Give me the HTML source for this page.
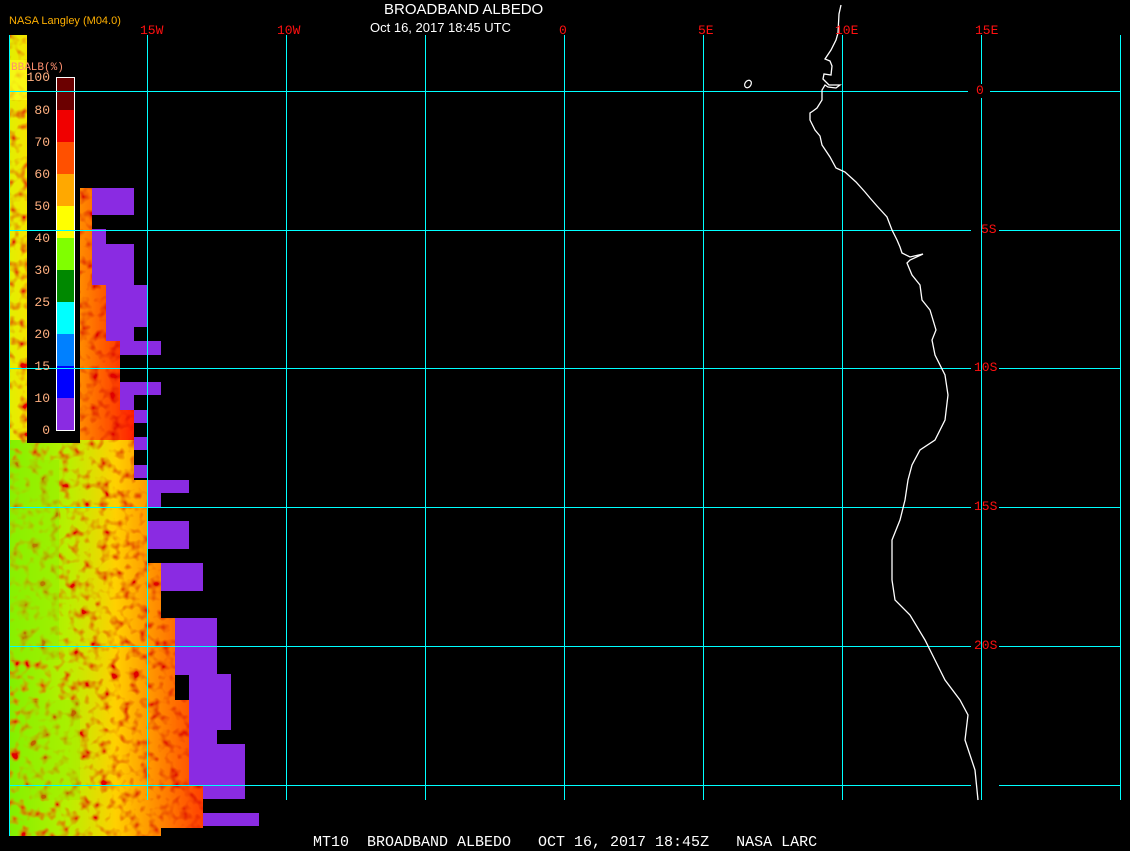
<!DOCTYPE html>
<html><head><meta charset="utf-8"><style>
html,body{margin:0;padding:0;background:#000;}
body{width:1130px;height:850px;position:relative;overflow:hidden;font-family:"Liberation Sans",sans-serif;}
.t{position:absolute;white-space:nowrap;}
.lab{position:absolute;color:#ff1010;font-family:"Liberation Mono",monospace;font-size:13px;line-height:13px;}
.lg{position:absolute;color:#ffb080;font-family:"Liberation Mono",monospace;font-size:13px;line-height:13px;text-align:right;width:40px;left:10px;}
</style></head><body>
<svg width="1130" height="850" style="position:absolute;left:0;top:0">
<defs>
<filter id="tx" x="0" y="0" width="100%" height="100%">
<feTurbulence type="fractalNoise" baseFrequency="0.1" numOctaves="2" seed="3" result="n"/>
<feColorMatrix type="matrix" values="0 0 0 0 0  0 0 0 0 0  0 0 0 0 0  0 0 0 -3 1.6" in="n" result="a"/>
<feFlood flood-color="#e00000" result="c"/>
<feComposite in="c" in2="a" operator="in" result="d"/>
<feComposite in="d" in2="SourceGraphic" operator="atop"/>
</filter>
<linearGradient id="lg1" x1="0" y1="0" x2="1" y2="0">
<stop offset="0" stop-color="#e0f000"/><stop offset="0.2" stop-color="#ffe000"/><stop offset="0.55" stop-color="#ff9000"/><stop offset="1" stop-color="#ff2000"/>
</linearGradient>
<linearGradient id="lg2" x1="0" y1="0" x2="1" y2="0">
<stop offset="0" stop-color="#80f000"/><stop offset="0.3" stop-color="#b8f000"/><stop offset="0.55" stop-color="#ffd000"/><stop offset="1" stop-color="#ff4000"/>
</linearGradient>
</defs>
<g filter="url(#tx)">
<polygon fill="url(#lg1)" points="9,35 27,35 27,443 80,443 80,188 92,188 92,272 106,272 106,341 120,341 120,410 134,410 134,441 9,441"/>
<polygon fill="url(#lg2)" points="9,440 134,440 134,480 147,480 147,563 161,563 161,618 175,618 175,700 189,700 189,744 203,744 203,828 161,828 161,836 9,836"/>
</g>
<rect x="9" y="60" width="18" height="40" fill="#ffff20" opacity="0.6"/>
<rect x="9" y="460" width="50" height="200" fill="#90f000" opacity="0.5"/>
<rect x="20" y="700" width="60" height="100" fill="#90f000" opacity="0.4"/>
<g fill="#8a2be2">
<rect x="92" y="188" width="42" height="27"/><rect x="92" y="229" width="14" height="15"/>
<rect x="92" y="244" width="42" height="41"/><rect x="106" y="285" width="41" height="42"/>
<rect x="106" y="327" width="28" height="14"/><rect x="120" y="341" width="41" height="14"/>
<rect x="120" y="382" width="41" height="13"/><rect x="120" y="395" width="14" height="15"/>
<rect x="134" y="410" width="13" height="13"/><rect x="134" y="437" width="13" height="13"/>
<rect x="134" y="465" width="13" height="13"/><rect x="147" y="480" width="42" height="13"/>
<rect x="147" y="493" width="14" height="14"/><rect x="147" y="521" width="42" height="28"/>
<rect x="161" y="563" width="42" height="28"/><rect x="175" y="618" width="42" height="57"/>
<rect x="189" y="674" width="42" height="56"/><rect x="189" y="730" width="28" height="14"/>
<rect x="189" y="744" width="56" height="41"/><rect x="203" y="785" width="42" height="14"/>
<rect x="203" y="813" width="56" height="13"/>
</g>
<rect x="27" y="35" width="53" height="408" fill="#000"/>
<g>
<rect x="56" y="77" width="19" height="33" fill="#6b0000"/>
<rect x="56" y="110" width="19" height="32" fill="#f00000"/>
<rect x="56" y="142" width="19" height="32" fill="#ff5000"/>
<rect x="56" y="174" width="19" height="32" fill="#ffa800"/>
<rect x="56" y="206" width="19" height="32" fill="#ffff00"/>
<rect x="56" y="238" width="19" height="32" fill="#80ff00"/>
<rect x="56" y="270" width="19" height="32" fill="#008800"/>
<rect x="56" y="302" width="19" height="32" fill="#00ffff"/>
<rect x="56" y="334" width="19" height="32" fill="#0080ff"/>
<rect x="56" y="366" width="19" height="32" fill="#0000ff"/>
<rect x="56" y="398" width="19" height="32" fill="#8a2be2"/>
<rect x="56.5" y="77.5" width="18" height="353" fill="none" stroke="#fff" stroke-width="1"/>
</g>
<g stroke="#00ffff" stroke-width="1" shape-rendering="crispEdges">
<line x1="9.5" y1="35" x2="9.5" y2="836"/>
<line x1="147.5" y1="35" x2="147.5" y2="800"/>
<line x1="286.5" y1="35" x2="286.5" y2="800"/>
<line x1="425.5" y1="35" x2="425.5" y2="800"/>
<line x1="564.5" y1="35" x2="564.5" y2="800"/>
<line x1="703.5" y1="35" x2="703.5" y2="800"/>
<line x1="842.5" y1="35" x2="842.5" y2="800"/>
<line x1="981.5" y1="35" x2="981.5" y2="84"/><line x1="981.5" y1="98" x2="981.5" y2="800"/>
<line x1="1120.5" y1="35" x2="1120.5" y2="800"/>
<line x1="9" y1="91.5" x2="968" y2="91.5"/><line x1="990" y1="91.5" x2="1120" y2="91.5"/>
<line x1="9" y1="230.5" x2="971" y2="230.5"/><line x1="999" y1="230.5" x2="1120" y2="230.5"/>
<line x1="9" y1="368.5" x2="971" y2="368.5"/><line x1="999" y1="368.5" x2="1120" y2="368.5"/>
<line x1="9" y1="507.5" x2="971" y2="507.5"/><line x1="999" y1="507.5" x2="1120" y2="507.5"/>
<line x1="9" y1="646.5" x2="971" y2="646.5"/><line x1="999" y1="646.5" x2="1120" y2="646.5"/>
<line x1="9" y1="785.5" x2="971" y2="785.5"/><line x1="999" y1="785.5" x2="1120" y2="785.5"/>
</g>
<polyline fill="none" stroke="#fff" stroke-width="1.3" points="841,5 839,14 838,33 836,40 831,50 825,59 830,61 832,66 831,75 824,74 823,79 826,82 829,85 840,85 836,88 828,87 825,85 822,90 822,100 817,108 813,111 810,113 810,120 815,130 820,136 822,145 830,157 836,168 845,172 856,182 865,192 870,198 877,206 887,217 892,230 897,240 900,247 902,253 910,257 923,254 910,260 907,263 912,275 920,285 922,300 930,310 936,330 932,340 935,355 945,375 948,395 945,420 935,440 920,450 912,465 908,480 905,500 900,520 892,540 892,580 895,600 910,615 925,640 935,660 945,680 960,700 968,715 965,740 975,770 978,800"/>
<ellipse cx="748" cy="84" rx="3" ry="4" transform="rotate(35 748 84)" fill="none" stroke="#fff" stroke-width="1.2"/>
</svg>
<div class="t" style="left:9px;top:15px;color:#ffb000;font-size:11px;">NASA Langley (M04.0)</div>
<div class="t" style="left:384px;top:1px;color:#fff;font-size:15px;">BROADBAND ALBEDO</div>
<div class="t" style="left:370px;top:20px;color:#fff;font-size:13px;">Oct 16, 2017 18:45 UTC</div>
<div class="t" style="left:11px;top:62px;color:#ff9070;font-size:11px;font-family:'Liberation Mono',monospace;">BBALB(%)</div>
<div class="lg" style="top:71px">100</div>
<div class="lg" style="top:104px">80</div>
<div class="lg" style="top:136px">70</div>
<div class="lg" style="top:168px">60</div>
<div class="lg" style="top:200px">50</div>
<div class="lg" style="top:232px">40</div>
<div class="lg" style="top:264px">30</div>
<div class="lg" style="top:296px">25</div>
<div class="lg" style="top:328px">20</div>
<div class="lg" style="top:360px">15</div>
<div class="lg" style="top:392px">10</div>
<div class="lg" style="top:424px">0</div>
<div class="lab" style="left:140px;top:24px">15W</div>
<div class="lab" style="left:277px;top:24px">10W</div>
<div class="lab" style="left:559px;top:24px">0</div>
<div class="lab" style="left:698px;top:24px">5E</div>
<div class="lab" style="left:835px;top:24px">10E</div>
<div class="lab" style="left:975px;top:24px">15E</div>
<div class="lab" style="left:976px;top:84px">0</div>
<div class="lab" style="left:981px;top:223px">5S</div>
<div class="lab" style="left:974px;top:361px">10S</div>
<div class="lab" style="left:974px;top:500px">15S</div>
<div class="lab" style="left:974px;top:639px">20S</div>
<div class="t" style="left:313px;top:835px;color:#fff;font-size:15px;line-height:15px;font-family:'Liberation Mono',monospace;white-space:pre;">MT10  BROADBAND ALBEDO   OCT 16, 2017 18:45Z   NASA LARC</div>
</body></html>
